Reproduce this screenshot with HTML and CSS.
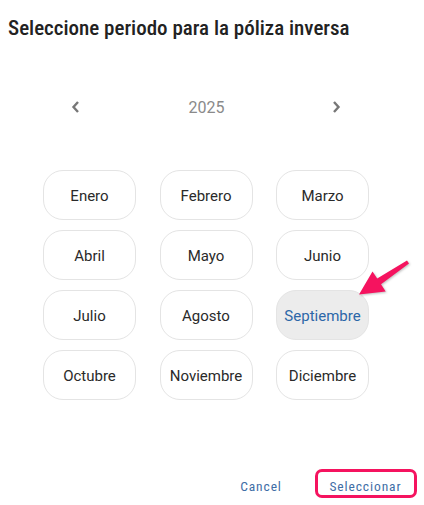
FILE: index.html
```html
<!DOCTYPE html>
<html>
<head>
<meta charset="utf-8">
<title>Seleccione periodo</title>
<link rel="stylesheet" href="styles.css">
</head>
<body>
<div class="dialog">
  <h1 class="title">Seleccione periodo para la póliza inversa</h1>

  <div class="year-nav">
    <button class="nav-btn" aria-label="Año anterior">
      <svg width="24" height="24" viewBox="0 0 24 24"><polyline points="15,7 10.5,12 15,17" /></svg>
    </button>
    <span class="year">2025</span>
    <button class="nav-btn" aria-label="Año siguiente">
      <svg width="24" height="24" viewBox="0 0 24 24"><polyline points="9,7 13.5,12 9,17" /></svg>
    </button>
  </div>

  <div class="months">
    <button class="month">Enero</button>
    <button class="month">Febrero</button>
    <button class="month">Marzo</button>
    <button class="month">Abril</button>
    <button class="month">Mayo</button>
    <button class="month">Junio</button>
    <button class="month">Julio</button>
    <button class="month">Agosto</button>
    <button class="month selected">Septiembre
      <!-- annotation arrow pointing at the selected month -->
      <svg class="arrow" width="70" height="55" viewBox="350 250 70 55">
        <polygon points="358,293.5 371.5,270.4 376.2,277.5 406,259.5 408,262.5 380,283.3 384.7,290.4" />
      </svg>
    </button>
    <button class="month">Octubre</button>
    <button class="month">Noviembre</button>
    <button class="month">Diciembre</button>
  </div>

  <div class="actions">
    <button class="text-btn">Cancel</button>
    <button class="text-btn primary">Seleccionar<span class="highlight"></span></button>
  </div>
</div>
</body>
</html>
```
FILE: styles.css
```css
body {
  margin: 0;
  background: white;
  font-family: Roboto, "DejaVu Sans", sans-serif;
}

button {
  font-family: inherit;
  background: none;
  border: none;
  padding: 0;
  cursor: pointer;
}

.dialog {
  width: 412px;
  padding-top: 15px;
}

.title {
  margin: 0 0 0 8px;
  font-size: 21px;
  line-height: 26px;
  font-weight: 500;
  font-stretch: condensed;
  color: #222;
  white-space: nowrap;
}

.year-nav {
  display: flex;
  align-items: center;
  justify-content: space-between;
  height: 26px;
  margin: 53px 63px 0;
}

.nav-btn {
  width: 24px;
  height: 24px;
  display: flex;
}

.nav-btn polyline {
  fill: none;
  stroke: #777;
  stroke-width: 2.4;
}

.year {
  font-size: 16px;
  color: #8a8a8a;
  margin-left: 1px;
}

.months {
  display: grid;
  grid-template-columns: repeat(3, 93px);
  grid-auto-rows: 50px;
  gap: 10px 23.5px;
  justify-content: center;
  margin-top: 50px;
}

.month {
  position: relative;
  padding-top: 2px;
  border: 1px solid #e4e4e4;
  border-radius: 20px;
  font-size: 15px;
  color: #2a2a2a;
}

.month.selected {
  background: #ececec;
  color: #2c67a8;
}

.arrow {
  position: absolute;
  left: 74px;
  top: -40px;
  overflow: visible;
}

.arrow polygon {
  fill: #f5135f;
  filter: drop-shadow(1px 1px 1px rgba(0, 0, 0, 0.25));
}

.actions {
  display: flex;
  justify-content: flex-end;
  align-items: center;
  gap: 31.5px;
  margin-top: 68px;
  padding-right: 2.5px;
}

.text-btn {
  position: relative;
  height: 36px;
  padding: 0 8px;
  font-size: 13.5px;
  font-stretch: condensed;
  letter-spacing: 0.9px;
  color: #3f6ea6;
}

.highlight {
  position: absolute;
  left: -6.5px;
  right: -7.5px;
  top: 1px;
  bottom: 6px;
  border: 3px solid #f5135f;
  border-radius: 7px;
}
```
